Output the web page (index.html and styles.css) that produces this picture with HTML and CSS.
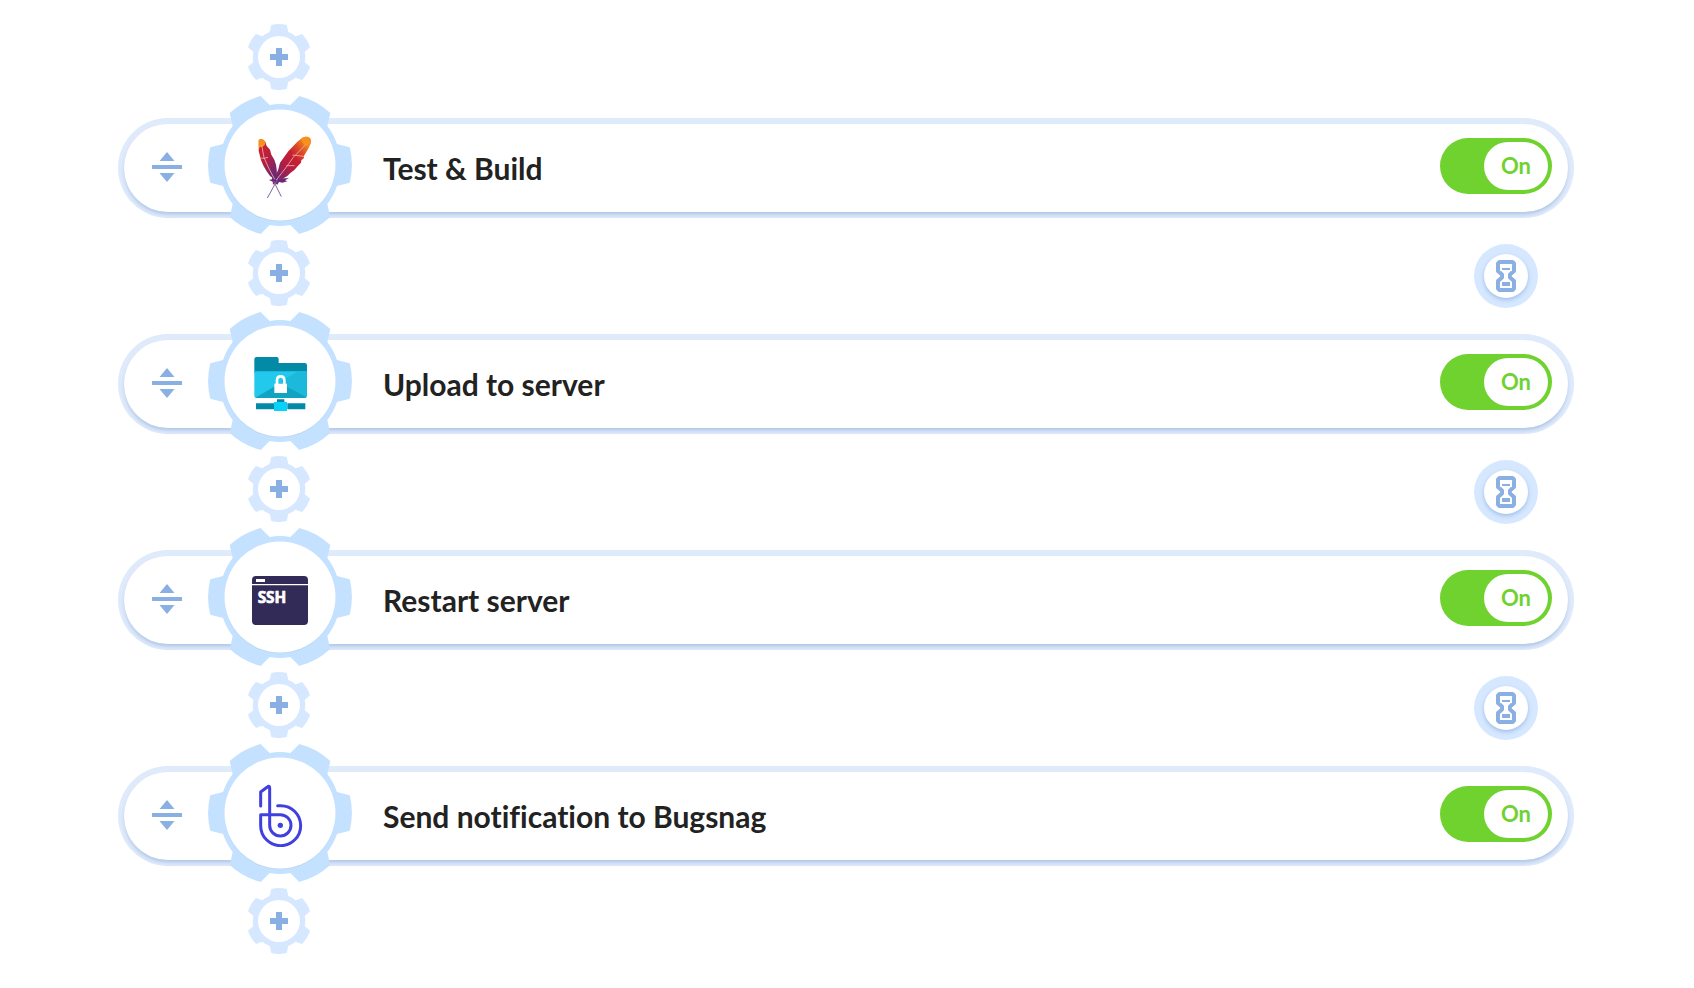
FILE: index.html
```html
<!DOCTYPE html>
<html lang="en">
<head>
    <meta charset="UTF-8">
    <meta name="viewport" content="width=device-width, initial-scale=1.0">
    <title>Pipeline</title>
    <link rel="stylesheet" href="styles.css">
</head>
<body>
    <!-- shared shapes -->
    <svg class="defs" aria-hidden="true">
        <symbol id="gear-large" viewBox="0 0 144 140">
            <path fill="#c4e2ff" d="M21.7 17A72 72 0 0 1 52.7 0L61.7 9A61 61 0 0 1 82.3 9L91.3 0A72 72 0 0 1 122.3 17L119.3 30A61 61 0 0 1 129 48L141.7 51.3A72 72 0 0 1 141.7 86.7L129 90A61 61 0 0 1 119.3 108L122.3 121A72 72 0 0 1 91.3 138L82.3 129A61 61 0 0 1 61.7 129L52.7 138A72 72 0 0 1 21.7 121L24.7 108A61 61 0 0 1 15 90L2.3 86.7A72 72 0 0 1 2.3 51.3L15 48A61 61 0 0 1 24.7 30Z"/>
            <circle cx="72" cy="70" r="55.5" fill="#bbdaf8"/>
            <circle cx="72" cy="69" r="55.5" fill="#fff"/>
        </symbol>
        <symbol id="gear-small" viewBox="0 0 62 66">
            <path fill="#d6e8ff" d="M23.3 1A33 33 0 0 1 38.7 1L40.3 8A26 26 0 0 1 47.7 12.3L54 10A33 33 0 0 1 62 23.3L56.7 28A26 26 0 0 1 56.7 38L62 42.7A33 33 0 0 1 54 56L47.7 53.7A26 26 0 0 1 40.3 58L38.7 65A33 33 0 0 1 23.3 65L21.7 58A26 26 0 0 1 14.3 53.7L8 56A33 33 0 0 1 0 42.7L5.3 38A26 26 0 0 1 5.3 28L0 23.3A33 33 0 0 1 8 10L14.3 12.3A26 26 0 0 1 21.7 8Z"/>
            <circle cx="31" cy="33" r="21" fill="#fff"/>
            <path fill="#8aafe2" d="M28 24h6v6h6v6h-6v6h-6v-6h-6v-6h6z"/>
        </symbol>
        <symbol id="drag" viewBox="0 0 30 30">
            <path fill="#8aafe2" d="M15 0l7.5 9h-15zM0 13h30v4H0zM7.5 21h15L15 30z"/>
        </symbol>
        <symbol id="hourglass" viewBox="0 0 20 32">
            <path fill="none" stroke="#8aafe2" stroke-width="4" stroke-linejoin="round" d="M3.5 2h13L18 3.5V11l-4 3.5v3l4 3.5v7.500L16.500 30h-13L2 28.500V21l4-3.500v-3L2 11V3.500z"/>
            <path fill="#8aafe2" d="M6 8h8v2H6zM6 22h8v4H6z"/>
        </symbol>
    </svg>

    <main class="pipeline">
        <div class="gap">
            <button class="add" aria-label="Add action"><svg width="62" height="66"><use href="#gear-small"/></svg></button>
        </div>

        <section class="step">
            <div class="step-body">
                <button class="drag" aria-label="Move"><svg width="30" height="30"><use href="#drag"/></svg></button>
                <div class="gear">
                    <svg width="144" height="140"><use href="#gear-large"/></svg>
                    <svg class="icon" viewBox="21 39 198 198">
                        <defs>
                            <linearGradient id="left" x1="0" y1="0" x2=".6" y2="1">
                                <stop offset=".15" stop-color="#f7901e"/>
                                <stop offset=".2" stop-color="#c8202f"/>
                                <stop offset=".5" stop-color="#bd1e3c"/>
                                <stop offset="1" stop-color="#6d2774"/>
                            </linearGradient>
                            <linearGradient id="right" x1="1" y1="0" x2="0" y2="1">
                                <stop offset=".12" stop-color="#f7901e"/>
                                <stop offset=".32" stop-color="#dc4a27"/>
                                <stop offset=".48" stop-color="#c8202f"/>
                                <stop offset=".7" stop-color="#b51d43"/>
                                <stop offset="1" stop-color="#6d2774"/>
                            </linearGradient>
                        </defs>
                        <path fill="url(#left)" d="M56 61C60 54 71 56 76 66L80 78L90 89L94 104L103 119L108 134L110 148L111 168L105 184L98 174L90 168L80 154L71 139L63 121L56 92Z"/>
                        <path fill="#f7901e" d="M56 61C60 54 71 56 76 66L75 73C72 80 65 83 56 80Z"/>
                        <path fill="url(#right)" d="M112 176L109 162L115 148L120 128L132 112L145 94L158 80L172 65L186 54C200 45 215 52 213 66C212 76 204 87 199 96L191 109L192 114L184 121L183 128L174 137L163 150L151 159L142 168L128 176Z"/>
                        <path fill="#f7901e" d="M185 55C200 45 215 52 213 66C212 72 208 76 203 77C194 77 184 69 185 55Z"/>
                        <path fill="#6d2774" d="M98 164L106 172L111 163L117 175L147 175L135 181L142 184L127 188L117 186L112 194L105 190L99 194L98 185L87 180L96 178Z"/>
                        <path fill="none" stroke="#edb2ad" stroke-width="2.500" d="M65 75L72 113L88 148L104 178M60 114L72 115L84 112M198 73L160 112L140 140L109 180M157 105L191 109M139 137L164 137"/>
                        <path fill="none" stroke="#8661a4" stroke-width="3" d="M113 178L82 234M101 184L124 230"/>
                    </svg>
                </div>
                <h2 class="title">Test &amp; Build</h2>
                <label class="toggle"><input type="checkbox" checked aria-label="Test &amp; Build"><span class="knob">On</span></label>
            </div>
        </section>

        <div class="gap">
            <button class="add" aria-label="Add action"><svg width="62" height="66"><use href="#gear-small"/></svg></button>
            <button class="wait" aria-label="Wait"><span class="wait-face"><svg width="20" height="32"><use href="#hourglass"/></svg></span></button>
        </div>

        <section class="step">
            <div class="step-body">
                <button class="drag" aria-label="Move"><svg width="30" height="30"><use href="#drag"/></svg></button>
                <div class="gear">
                    <svg width="144" height="140"><use href="#gear-large"/></svg>
                    <svg class="icon" viewBox="21 27 198 198">
                        <path fill="#028aa7" d="M50 51H110Q116 51 116 57V69H194Q201 69 201 76V100H43V58Q43 51 50 51Z"/>
                        <path fill="#22c9ec" d="M43 94H201V167Q201 174 194 174H50Q43 174 43 167Z"/>
                        <path fill="#1cb9da" d="M176 94H201V167L194 174L122 123Z"/>
                        <path fill="#10a3c2" d="M46 173L122 129L199 172Q197 174 194 174H50Q47 174 46 173Z"/>
                        <path fill="none" stroke="#fff" stroke-width="8" d="M111 134V121Q111 109 122 109Q133 109 133 121V134"/>
                        <path fill="#fff" d="M103 131H141V159H103Z"/>
                        <path fill="#028aa7" d="M48 190H102V208H48ZM142 190H196V208H142ZM111 178H133V188H111Z"/>
                        <path fill="#08d1fb" d="M102 186H141V213H102Z"/>
                    </svg>
                </div>
                <h2 class="title">Upload to server</h2>
                <label class="toggle"><input type="checkbox" checked aria-label="Upload to server"><span class="knob">On</span></label>
            </div>
        </section>

        <div class="gap">
            <button class="add" aria-label="Add action"><svg width="62" height="66"><use href="#gear-small"/></svg></button>
            <button class="wait" aria-label="Wait"><span class="wait-face"><svg width="20" height="32"><use href="#hourglass"/></svg></span></button>
        </div>

        <section class="step">
            <div class="step-body">
                <button class="drag" aria-label="Move"><svg width="30" height="30"><use href="#drag"/></svg></button>
                <div class="gear">
                    <svg width="144" height="140"><use href="#gear-large"/></svg>
                    <svg class="icon" viewBox="21 15 198 198">
                        <path fill="#332b57" d="M48 48H192Q204 48 204 60V72H36V60Q36 48 48 48ZM36 76H204V183Q204 195 192 195H48Q36 195 36 183Z"/>
                        <path fill="#fff" d="M48 57H75V66H48Z"/>
                        <text class="ssh" x="53" y="129">SSH</text>
                    </svg>
                </div>
                <h2 class="title">Restart server</h2>
                <label class="toggle"><input type="checkbox" checked aria-label="Restart server"><span class="knob">On</span></label>
            </div>
        </section>

        <div class="gap">
            <button class="add" aria-label="Add action"><svg width="62" height="66"><use href="#gear-small"/></svg></button>
            <button class="wait" aria-label="Wait"><span class="wait-face"><svg width="20" height="32"><use href="#hourglass"/></svg></span></button>
        </div>

        <section class="step">
            <div class="step-body">
                <button class="drag" aria-label="Move"><svg width="30" height="30"><use href="#drag"/></svg></button>
                <div class="gear">
                    <svg width="144" height="140"><use href="#gear-large"/></svg>
                    <svg class="icon" viewBox="21 33 198 198">
                        <path fill="none" stroke="#4040e0" stroke-width="9" stroke-linecap="round" stroke-linejoin="round" d="M62 108V66L82 51Q89 46 89 54V166A32 32 0 1 0 121 134H62V167A60 60 0 1 0 122 107H113"/>
                        <circle cx="121" cy="166" r="8" fill="#4040e0"/>
                    </svg>
                </div>
                <h2 class="title">Send notification to Bugsnag</h2>
                <label class="toggle"><input type="checkbox" checked aria-label="Send notification to Bugsnag"><span class="knob">On</span></label>
            </div>
        </section>

        <div class="gap">
            <button class="add" aria-label="Add action"><svg width="62" height="66"><use href="#gear-small"/></svg></button>
        </div>
    </main>
</body>
</html>
```
FILE: styles.css
```css
* {
    box-sizing: border-box;
}
body {
    margin: 0;
    background-color: #fff;
    color: #222;
    font-family: Lato, sans-serif;
}
button {
    padding: 0;
    border: none;
    background: none;
    cursor: pointer;
}
svg {
    display: block;
}
.defs {
    display: none;
}
.pipeline {
    padding: 2px 120px 0 118px;
}
.gap {
    display: flex;
    justify-content: space-between;
    min-height: 116px;
    padding: 22px 36px 26px 130px;
}
.add {
    align-self: flex-start;
}
.wait {
    align-self: flex-end;
    padding: 10px;
    border-radius: 50%;
    background-color: #d6e8ff;
}
.wait-face {
    display: flex;
    align-items: center;
    justify-content: center;
    width: 44px;
    height: 44px;
    border-radius: 50%;
    background-color: #fff;
    box-shadow: 0 2px 4px rgba(80, 130, 200, 0.4);
}
.step {
    padding: 6px;
    border-radius: 50px;
    background-color: #dfeafb;
}
.step-body {
    display: flex;
    align-items: center;
    height: 88px;
    padding: 0 16px 4px 28px;
    border-radius: 44px;
    background-color: #fff;
    box-shadow: 0 3px 4px -1px rgba(80, 130, 190, 0.4);
}
.drag {
    padding-top: 2px;
    cursor: move;
}
.gear {
    display: grid;
    place-items: center;
    margin-left: 26px;
}
.gear > svg {
    grid-area: 1 / 1;
}
.icon {
    width: 66px;
    height: 66px;
}
.ssh {
    fill: #fff;
    stroke: #fff;
    stroke-width: 2px;
    font-family: "Liberation Sans Narrow", "Open Sans", sans-serif;
    font-size: 46px;
    font-weight: 700;
}
.title {
    flex: 1;
    margin: 0;
    padding: 4px 0 0 31px;
    font-size: 30px;
    font-weight: 700;
    font-variant-ligatures: none;
    line-height: 36px;
}
.toggle {
    position: relative;
    display: flex;
    justify-content: flex-end;
    width: 112px;
    padding: 4px;
    border-radius: 28px;
    background-color: #6fd22f;
}
.toggle input {
    position: absolute;
    inset: 0;
    width: 100%;
    height: 100%;
    margin: 0;
    opacity: 0;
    cursor: pointer;
}
.knob {
    width: 64px;
    border-radius: 24px;
    background-color: #fff;
    color: #6fd22f;
    font-size: 22px;
    font-weight: 700;
    line-height: 48px;
    text-align: center;
}
```
